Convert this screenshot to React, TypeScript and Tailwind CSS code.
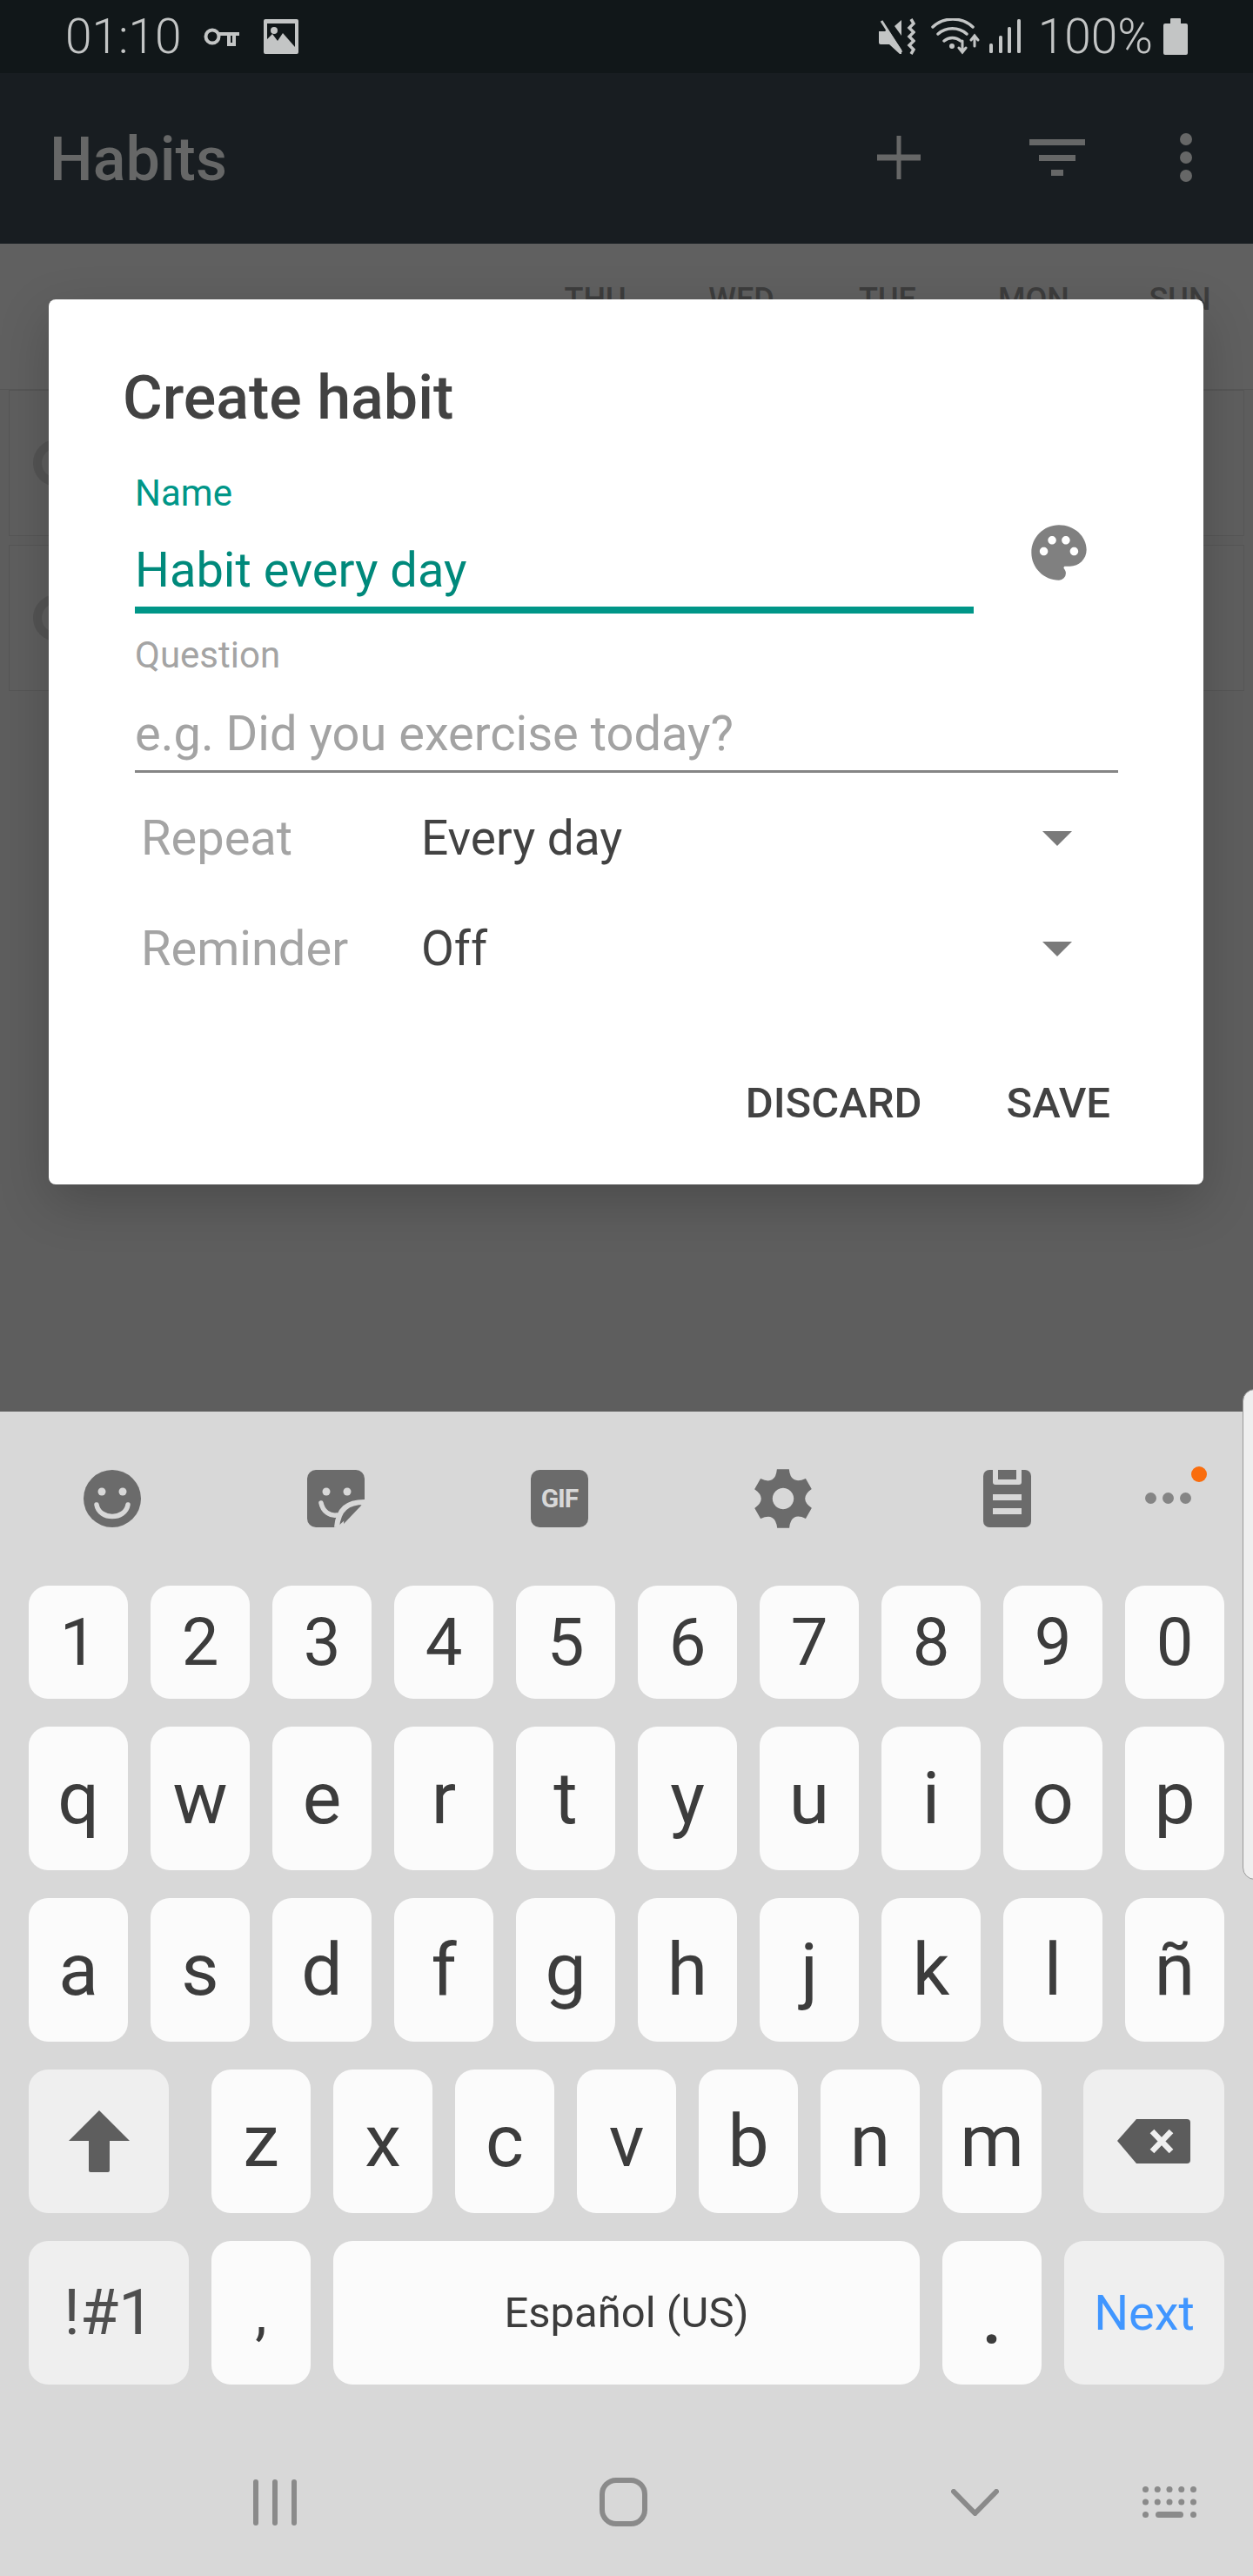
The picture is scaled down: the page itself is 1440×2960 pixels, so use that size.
import React from "react";
import { MdPalette } from "react-icons/md";

function gearPath() {
  const cx = 50, cy = 50, pts: string[] = [];
  for (let i = 0; i < 6; i++) {
    const a = (Math.PI / 3) * i - Math.PI / 2;
    const p = (r: number, d: number) => {
      const t = a + d;
      return `${(cx + r * Math.cos(t)).toFixed(1)} ${(cy + r * Math.sin(t)).toFixed(1)}`;
    };
    pts.push(`${i === 0 ? "M" : "L"}${p(48, -0.2)}`, `L${p(48, 0.2)}`, `Q${p(36, 0.3)} ${p(35, 0.52)}`, `Q${p(36, 0.74)} ${p(48, 0.84)}`);
  }
  return pts.join(" ") + " Z";
}

const Key = ({ label, className = "w-[114px]", text = "text-[84px]" }: { label: string; className?: string; text?: string }) => (
  <div className={`${className} h-full shrink-0 rounded-[22px] bg-[#fbfbfb] flex items-center justify-center text-[#3c3c3c] ${text}`}>{label}</div>
);

const Row = ({ keys }: { keys: string }) => (
  <div className="flex gap-[26px] h-[165px]">
    {keys.split("").map((k) => (
      <Key key={k} label={k} />
    ))}
  </div>
);

const Habit = () => (
  <div className="h-[168px] mx-[10px] border border-[#565656] bg-[#5f5f5f] flex items-center pl-[27px]">
    <div className="w-[54px] h-[54px] rounded-full border-[10px] border-[#545454]" />
  </div>
);

export default function App() {
  return (
    <div className="relative w-[1440px] h-[2960px] overflow-hidden flex flex-col bg-[#5f5f5f] font-['Roboto',sans-serif]">
      {/* status bar */}
      <div className="h-[84px] shrink-0 bg-[#111719] flex items-center pl-[75px] pr-[75px] text-[#c3c5c5]">
        <span className="text-[55px] leading-none font-light w-[159px]">01:10</span>
        <svg width="42" height="24" viewBox="0 0 42 24" fill="none" stroke="currentColor" strokeWidth="4">
          <circle cx="10" cy="12" r="7.5" />
          <path d="M18 9H41M29 9v12h6V10" />
        </svg>
        <svg className="ml-[27px]" width="40" height="40" viewBox="0 0 40 40" fill="currentColor">
          <path fillRule="evenodd" d="M2 0h36a2 2 0 0 1 2 2v36a2 2 0 0 1-2 2H2a2 2 0 0 1-2-2V2a2 2 0 0 1 2-2Zm2 5v18l6-6 6 8 6-9 14 16V5Z" />
          <circle cx="12" cy="13" r="4" />
        </svg>
        <div className="ml-auto flex items-center">
          <svg width="42" height="42" viewBox="0 0 42 42" fill="none" stroke="currentColor">
            <path d="M0 15h7l3-3L26 36v5h-2L12 30H2a2 2 0 0 1-2-2Z" fill="currentColor" stroke="none" />
            <path d="M18 9L26 2V20Z" fill="currentColor" stroke="none" />
            <path d="M3 3L26 39" strokeWidth="3" />
            <path d="M37 1l3 5-5 5 5 5-5 5 5 5-5 5 5 5-3 5" strokeWidth="3.5" />
          </svg>
          <svg className="ml-[18px]" width="56" height="42" viewBox="0 0 56 42" fill="none" stroke="currentColor" strokeWidth="3.5" strokeLinecap="round">
            <path d="M2 10a34 34 0 0 1 46 0M8 18a25 25 0 0 1 33 0M15 26a15 15 0 0 1 19 0" />
            <circle cx="24" cy="32" r="3" fill="currentColor" stroke="none" />
            <path d="M36 26v11M32 34l4 5 4-5M50 32V21M46 25l4-5 4 5" strokeWidth="3" />
          </svg>
          <svg className="ml-[11px]" width="36" height="40" viewBox="0 0 36 40" fill="currentColor">
            <rect x="0" y="28" width="4" height="11" rx="1.5" />
            <rect x="11" y="19" width="4" height="20" rx="1.5" />
            <rect x="21" y="9" width="4" height="30" rx="1.5" />
            <rect x="32" y="0" width="4" height="39" rx="1.5" />
          </svg>
          <span className="ml-[20px] text-[55px] leading-none font-light">100%</span>
          <svg className="ml-[12px]" width="28" height="42" viewBox="0 0 28 42" fill="currentColor">
            <path d="M8 1a1 1 0 0 1 1-1h10a1 1 0 0 1 1 1v5h6a2 2 0 0 1 2 2v32a2 2 0 0 1-2 2H2a2 2 0 0 1-2-2V8a2 2 0 0 1 2-2h6Z" />
          </svg>
        </div>
      </div>

      {/* app bar */}
      <div className="h-[196px] shrink-0 bg-[#181d21] flex items-center pl-[57px] text-[#666767]">
        <span className="text-[70px] leading-none font-medium mt-[2px]">Habits</span>
        <svg className="ml-auto -mt-[2px]" width="50" height="50" viewBox="0 0 50 50" fill="currentColor">
          <path d="M22.5 0h5v21.5H50v7H27.5V50h-5V28.5H0v-7h22.5Z" />
        </svg>
        <svg className="ml-[125px] -mt-[2px]" width="64" height="42" viewBox="0 0 64 42" fill="currentColor">
          <path d="M0 0h64v7H0ZM11 18h42v7H11ZM25 35h14v7H25Z" />
        </svg>
        <svg className="ml-[109px] mr-[70px] -mt-[2px]" width="14" height="56" viewBox="0 0 14 56" fill="currentColor">
          <circle cx="7" cy="7" r="7" />
          <circle cx="7" cy="28" r="7" />
          <circle cx="7" cy="49" r="7" />
        </svg>
      </div>

      {/* dimmed page */}
      <div className="h-[1342px] shrink-0 bg-[#5e5e5e] flex flex-col">
        <div className="flex justify-end h-[168px] pt-[43px] text-[36px] leading-[42px] font-medium text-[#3d3d3d] bg-[#606060] border-b border-[#575757]">
          {["THU", "WED", "TUE", "MON", "SUN"].map((d) => (
            <span key={d} className="w-[168px] text-center">{d}</span>
          ))}
        </div>
        <div className="flex flex-col gap-[10px]">
          <Habit />
          <Habit />
        </div>
      </div>

      {/* dialog */}
      <div className="absolute left-[56px] top-[344px] w-[1327px] h-[1017px] rounded-[8px] bg-white shadow-[0_20px_60px_rgba(0,0,0,0.2)] flex flex-col pl-[86px]">
        <div className="-ml-[1px] mt-[72px] text-[70px] leading-[82px] font-medium text-[#424242]">Create habit</div>
        <div className="pl-[13px] flex flex-col">
          <div className="flex">
            <div className="w-[964px]">
              <div className="mt-[45px] text-[42px] leading-[48px] text-[#009688]">Name</div>
              <div className="mt-[32px] text-[56px] leading-[64px] text-[#00897b]">Habit every day</div>
              <div className="mt-[10px] h-[8px] bg-[#009688]" />
            </div>
            <MdPalette className="ml-[60px] mt-[99px] text-[#808080]" size={76} />
          </div>
          <div className="mt-[24px] text-[42px] leading-[48px] text-[#a4a4a4]">Question</div>
          <div className="mt-[34px] text-[56px] leading-[64px] text-[#a3a3a3]">e.g. Did you exercise today?</div>
          <div className="mt-[10px] w-[1130px] h-[3px] bg-[#858585]" />
          {[["Repeat", "Every day", "mt-[43px]"], ["Reminder", "Off", "mt-[63px]"]].map(([a, b, m]) => (
            <div key={a} className={`flex items-center ${m} text-[56px] leading-[64px] h-[64px]`}>
              <span className="w-[329px] pl-[7px] text-[#a4a4a4]">{a}</span>
              <span className="text-[#424242] text-[55px]">{b}</span>
              <svg className="ml-auto mr-[151px]" width="34" height="17" viewBox="0 0 34 17" fill="#7a7a7a">
                <path d="M0 0h34L17 17Z" />
              </svg>
            </div>
          ))}
        </div>
        <div className="mt-[118px] flex justify-end pr-[107px] text-[49px] leading-[56px] font-medium text-[#424242]">
          <span>DISCARD</span>
          <span className="ml-[97px]">SAVE</span>
        </div>
      </div>

      {/* keyboard */}
      <div className="flex-1 bg-[#d8d8d8] flex flex-col">
        <div className="h-[200px] shrink-0 flex items-center pl-[96px] text-[#6b6b6b] relative">
          <svg width="66" height="66" viewBox="0 0 66 66">
            <circle cx="33" cy="33" r="33" fill="currentColor" />
            <circle cx="21" cy="25" r="4.5" fill="#d8d8d8" />
            <circle cx="45" cy="25" r="4.5" fill="#d8d8d8" />
            <path d="M15 40c3 18 33 18 36 0" fill="none" stroke="#d8d8d8" strokeWidth="5.5" strokeLinecap="round" />
          </svg>
          <svg className="ml-[191px]" width="66" height="66" viewBox="0 0 66 66">
            <path d="M10 0h46a10 10 0 0 1 10 10v27L34 66H10A10 10 0 0 1 0 56V10A10 10 0 0 1 10 0Z" fill="currentColor" />
            <path d="M66 37c-20 0-30 8-32 29" fill="none" stroke="#d8d8d8" strokeWidth="6" />
            <path d="M62 41L42 62c0-12 6-20 20-21Z" fill="currentColor" />
            <circle cx="22" cy="25" r="4.5" fill="#d8d8d8" />
            <circle cx="46" cy="25" r="4.5" fill="#d8d8d8" />
            <path d="M16 38c2 10 10 15 18 14" fill="none" stroke="#d8d8d8" strokeWidth="5.5" strokeLinecap="round" />
          </svg>
          <div className="ml-[191px] w-[66px] h-[66px] rounded-[10px] bg-[#6b6b6b] flex items-center justify-center text-[#d8d8d8] text-[30px] leading-none font-bold tracking-[-1px]">GIF</div>
          <svg className="ml-[188px]" width="72" height="72" viewBox="0 0 100 100">
            <path fillRule="evenodd" d={gearPath() + " M50 33a17 17 0 1 0 0.01 0Z"} fill="currentColor" />
          </svg>
          <svg className="ml-[194px]" width="55" height="66" viewBox="0 0 55 66">
            <rect width="55" height="66" rx="7" fill="currentColor" />
            <path d="M11 0h33v14a3 3 0 0 1-3 3H14a3 3 0 0 1-3-3Z" fill="#d8d8d8" />
            <rect x="17" y="0" width="21" height="11" fill="currentColor" />
            <rect x="11" y="28" width="33" height="7" fill="#d8d8d8" />
            <rect x="11" y="44" width="33" height="7" fill="#d8d8d8" />
          </svg>
          <svg className="ml-[131px] mt-[-2px] text-[#858585]" width="53" height="13" viewBox="0 0 53 13" fill="currentColor">
            <circle cx="6.5" cy="6.5" r="6.5" />
            <circle cx="26.5" cy="6.5" r="6.5" />
            <circle cx="46.5" cy="6.5" r="6.5" />
          </svg>
          <div className="absolute left-[1369px] top-[63px] w-[18px] h-[18px] rounded-full bg-[#f96d0e]" />
        </div>

        <div className="px-[33px] flex flex-col gap-[32px]">
          <div className="flex gap-[26px] h-[130px]">
            {"1234567890".split("").map((k) => (
              <Key key={k} label={k} text="text-[76px]" />
            ))}
          </div>
          <Row keys="qwertyuiop" />
          <Row keys="asdfghjklñ" />
          <div className="flex h-[165px] gap-[26px]">
            <div className="w-[161px] shrink-0 mr-[23px] rounded-[22px] bg-[#efefef] flex items-center justify-center">
              <svg width="70" height="71" viewBox="0 0 70 71" fill="#5e5e5e">
                <path d="M35 0l35 35H47v34a2 2 0 0 1-2 2H25a2 2 0 0 1-2-2V35H0Z" />
              </svg>
            </div>
            {"zxcvbnm".split("").map((k) => (
              <Key key={k} label={k} />
            ))}
            <div className="w-[162px] shrink-0 ml-[22px] rounded-[22px] bg-[#efefef] flex items-center justify-center">
              <svg width="84" height="51" viewBox="0 0 84 51">
                <path d="M22 0h58a4 4 0 0 1 4 4v43a4 4 0 0 1-4 4H22L0 25Z" fill="#5c5c5c" />
                <path d="M40 14l22 23M62 14L40 37" stroke="#efefef" strokeWidth="6.5" />
              </svg>
            </div>
          </div>
          <div className="flex h-[165px] gap-[26px]">
            <div className="w-[184px] shrink-0 rounded-[22px] bg-[#efefef] flex items-center justify-center text-[72px] text-[#4f4f4f]">!#1</div>
            <Key label="," text="text-[68px]" />
            <Key label="Español (US)" className="w-[674px]" text="text-[49px]" />
            <Key label="." text="text-[84px] pt-[14px] font-medium" />
            <div className="w-[184px] shrink-0 rounded-[22px] bg-[#efefef] flex items-center justify-center text-[56px] text-[#4096ff]">Next</div>
          </div>
        </div>

        {/* nav bar */}
        <div className="flex-1 flex items-center pl-[291px] pt-[50px] text-[#8a8a8a]">
          <svg width="50" height="53" viewBox="0 0 50 53" fill="currentColor">
            <rect x="0" y="0" width="6" height="53" rx="3" />
            <rect x="22" y="0" width="6" height="53" rx="3" />
            <rect x="44" y="0" width="6" height="53" rx="3" />
          </svg>
          <svg className="ml-[348px]" width="55" height="56" viewBox="0 0 55 56" fill="none" stroke="currentColor" strokeWidth="6">
            <rect x="3" y="3" width="49" height="50" rx="16" />
          </svg>
          <svg className="ml-[349px]" width="55" height="31" viewBox="0 0 55 31" fill="none" stroke="currentColor" strokeWidth="6" strokeLinecap="round" strokeLinejoin="round">
            <path d="M3 3l24.5 25L52 3" />
          </svg>
          <svg className="ml-[165px]" width="62" height="36" viewBox="0 0 62 36" fill="currentColor">
            {[0, 1, 2, 3, 4].flatMap((i) => [0, 1].map((r) => <circle key={`${i}-${r}`} cx={3.5 + i * 13.75} cy={3.5 + r * 14.5} r="3.5" />))}
            <circle cx="3.5" cy="32.5" r="3.5" />
            <circle cx="58.5" cy="32.5" r="3.5" />
            <rect x="15" y="29" width="32" height="7" rx="3.5" />
          </svg>
        </div>
      </div>

      {/* edge panel handle */}
      <div className="absolute left-[1428px] top-[1596px] w-[24px] h-[564px] rounded-l-[14px] border border-[#9a9a9a] bg-[#efefef]" />
    </div>
  );
}
